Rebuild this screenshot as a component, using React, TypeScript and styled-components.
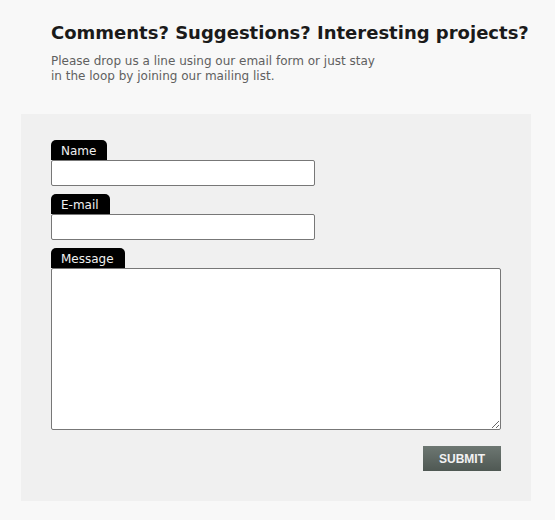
import React from "react";
import styled, { createGlobalStyle } from "styled-components";

const Global = createGlobalStyle`
  html, body { margin: 0; padding: 0; background: #f8f8f8; }
  body { font-family: "DejaVu Sans", Verdana, sans-serif; }
`;

const Page = styled.div`
  width: 555px;
  height: 520px;
  padding: 22px 0 0 21px;
  box-sizing: border-box;
`;

const Intro = styled.div`
  padding-left: 30px;
  margin-bottom: 30px;
`;

const Heading = styled.h1`
  margin: 0 0 10px;
  font-size: 18px;
  line-height: 22px;
  font-weight: bold;
  color: #1a1a1a;
`;

const Lead = styled.p`
  margin: 0;
  font-size: 12px;
  line-height: 15px;
  color: #606060;
  width: 332px;
`;

const Panel = styled.form`
  width: 510px;
  height: 387px;
  box-sizing: border-box;
  background: #f0f0f0;
  padding: 26px 30px 30px;
  display: flex;
  flex-direction: column;
`;

const Field = styled.div`
  display: flex;
  flex-direction: column;
  align-items: flex-start;
  margin-bottom: 8px;
`;

const Tab = styled.label`
  box-sizing: border-box;
  background: #000;
  color: #f0f0f0;
  font-size: 12px;
  line-height: 16px;
  height: 20px;
  padding: 3px 11px 1px 10px;
  border-radius: 5px 5px 0 0;
`;

const Input = styled.input`
  width: 264px;
  height: 26px;
  box-sizing: border-box;
  border: 1px solid #777;
  border-radius: 2px;
  background: #fff;
  margin: 0;
  padding: 2px 4px;
`;

const Area = styled.textarea`
  width: 450px;
  height: 162px;
  box-sizing: border-box;
  border: 1px solid #777;
  border-radius: 2px;
  background: #fff;
  margin: 0;
  padding: 2px 4px;
`;

const Actions = styled.div`
  display: flex;
  justify-content: flex-end;
  width: 450px;
  margin-top: 8px;
`;

const Submit = styled.button`
  width: 78px;
  height: 25px;
  border: none;
  background: linear-gradient(#6d7772, #4f5853);
  color: #f2f2f2;
  font-family: "Liberation Sans", Arial, sans-serif;
  font-weight: bold;
  font-size: 12px;
  padding: 0;
`;

export default function App() {
  return (
    <Page>
      <Global />
      <Intro>
        <Heading>Comments? Suggestions? Interesting projects?</Heading>
        <Lead>
          Please drop us a line using our email form or just stay in the loop by joining our mailing list.
        </Lead>
      </Intro>
      <Panel onSubmit={(e) => e.preventDefault()}>
        <Field>
          <Tab htmlFor="name">Name</Tab>
          <Input id="name" type="text" />
        </Field>
        <Field>
          <Tab htmlFor="email">E-mail</Tab>
          <Input id="email" type="email" />
        </Field>
        <Field>
          <Tab htmlFor="msg">Message</Tab>
          <Area id="msg" />
        </Field>
        <Actions>
          <Submit type="submit">SUBMIT</Submit>
        </Actions>
      </Panel>
    </Page>
  );
}
